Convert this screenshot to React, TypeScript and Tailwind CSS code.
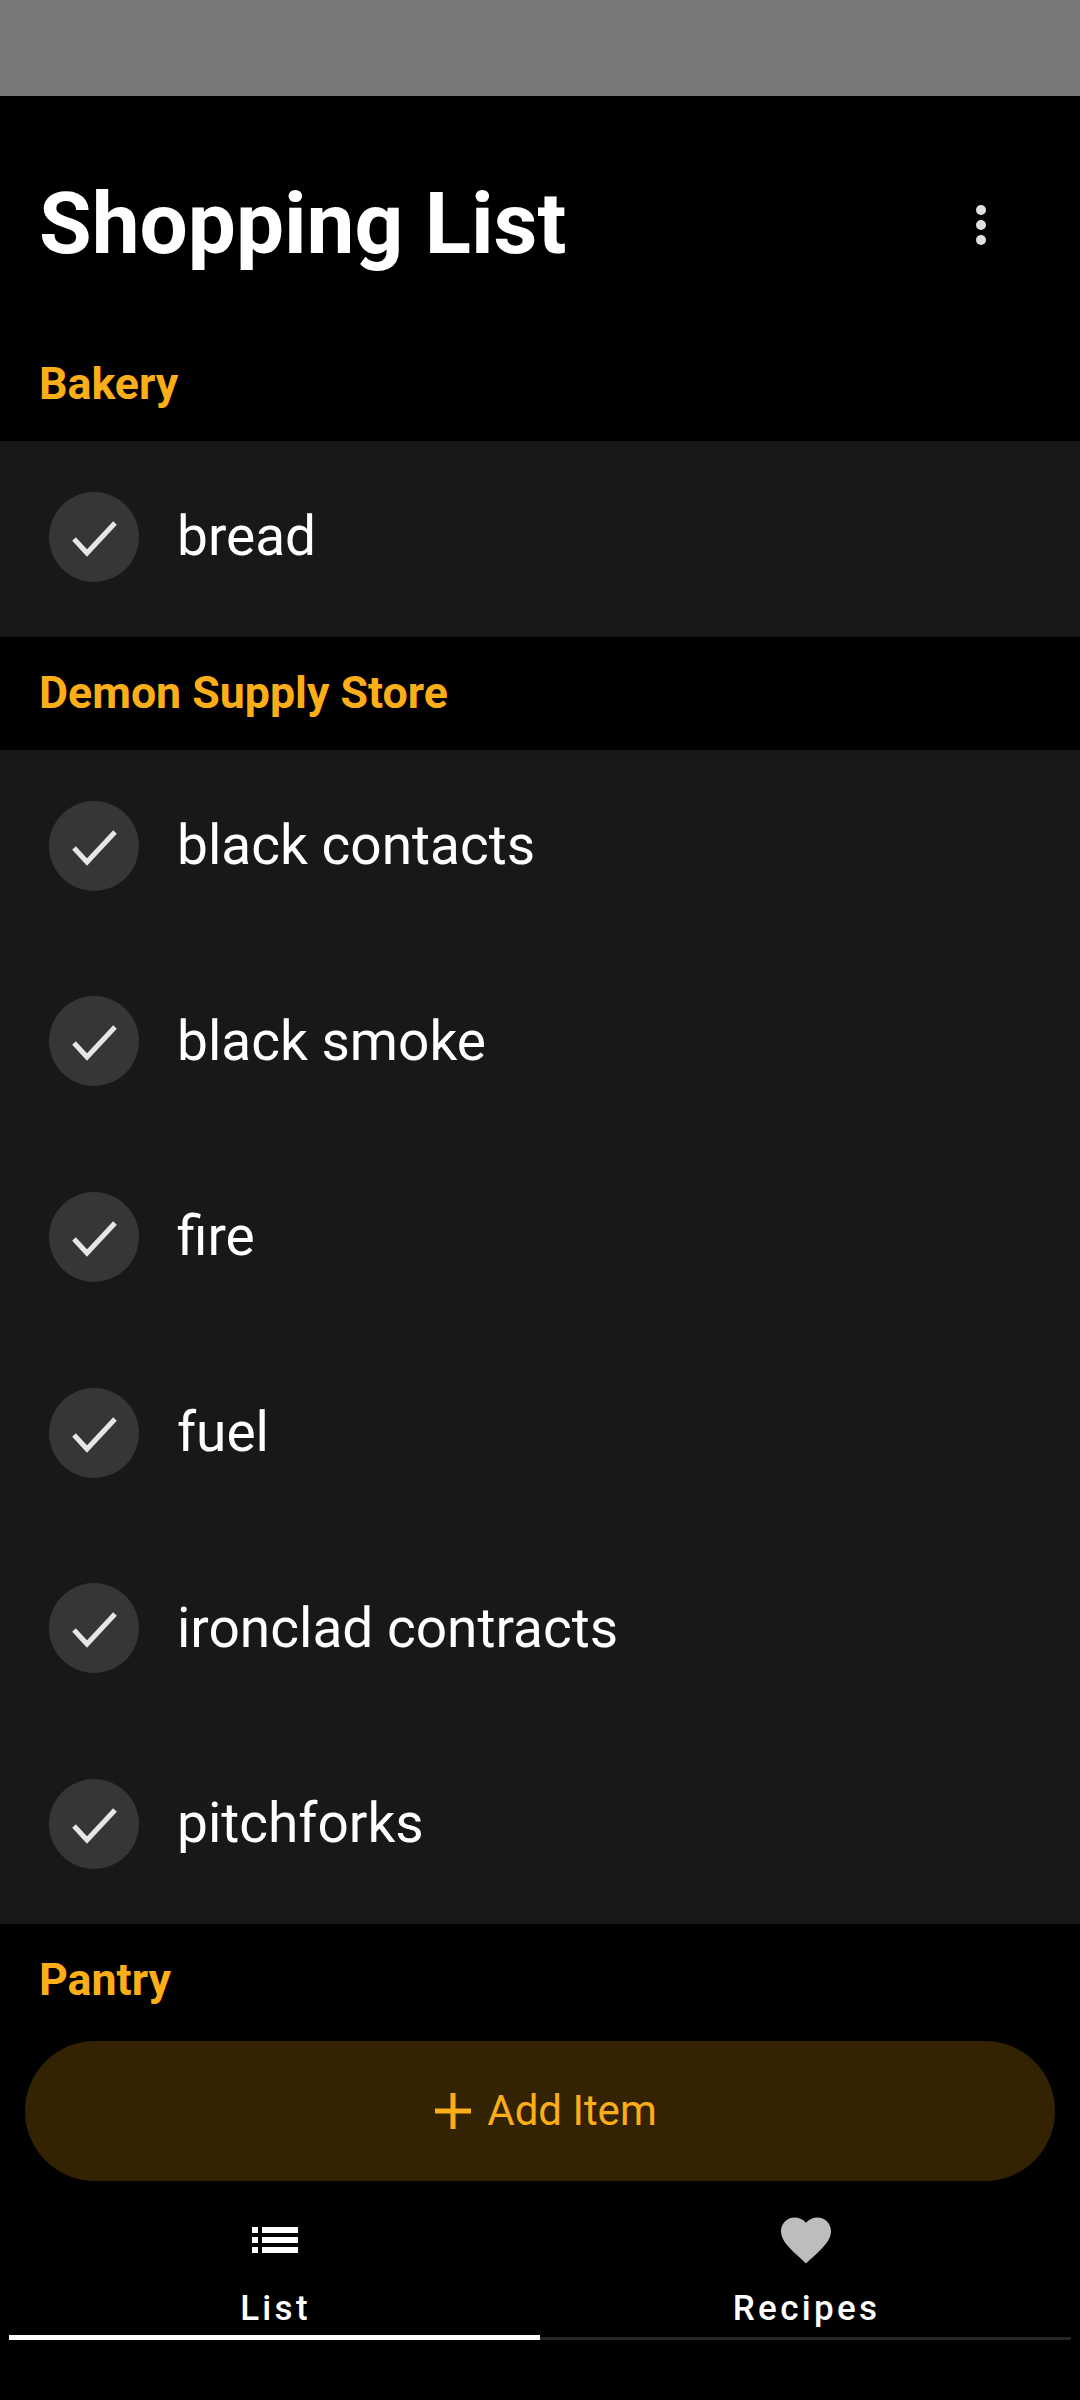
import React from 'react';

const sections = [
  { name: 'Bakery', items: ['bread'], headerClass: 'h-[105px] pb-[8px]' },
  {
    name: 'Demon Supply Store',
    items: ['black contacts', 'black smoke', 'fire', 'fuel', 'ironclad contracts', 'pitchforks'],
    headerClass: 'h-[113px]'
  },
  { name: 'Pantry', items: [], headerClass: 'h-[113px]' }
];

const CheckButton = () => (
  <div className="w-[90px] h-[90px] rounded-full bg-[#363636] shrink-0">
    <svg width="90" height="90" viewBox="0 0 90 90" fill="none">
      <path d="M25 47 L38 61 L66 31" stroke="#e6e6e6" strokeWidth="5" strokeLinecap="butt" strokeLinejoin="miter" />
    </svg>
  </div>
);

const App: React.FC = () => {
  return (
    <div className="h-[2400px] w-[1080px] bg-black flex flex-col overflow-hidden font-['Roboto',sans-serif]">
      <div className="h-[96px] bg-[#797979] shrink-0" />

      <header className="h-[240px] shrink-0 flex items-center justify-between pl-[39px] pr-[92px] pt-[18px]">
        <h1 className="text-[85.5px] leading-none font-bold text-white">Shopping List</h1>
        <svg width="14" height="44" viewBox="0 0 14 44" fill="#e0e0e0">
          <circle cx="7" cy="7" r="5" />
          <circle cx="7" cy="22" r="5" />
          <circle cx="7" cy="37" r="5" />
        </svg>
      </header>

      <main className="flex-1 min-h-0 overflow-hidden">
        {sections.map((section) => (
          <section key={section.name}>
            <div className={`${section.headerClass} flex items-center pl-[39px]`}>
              <h2 className="text-[44.7px] leading-none font-bold text-[#fbae17]">{section.name}</h2>
            </div>
            {section.items.length > 0 && (
              <ul className="bg-[#181818]">
                {section.items.map((item) => (
                  <li key={item} className="h-[195.7px] flex items-center pl-[49px] gap-[38px] pb-[4px]">
                    <CheckButton />
                    <span className="text-[55px] leading-none text-white">{item}</span>
                  </li>
                ))}
              </ul>
            )}
          </section>
        ))}
      </main>

      <div className="shrink-0 px-[25px]">
        <button type="button" className="w-full h-[140px] rounded-full bg-[#342303] flex items-center justify-center gap-[16px] pl-[12px] text-[#fbae17]">
          <svg width="36" height="36" viewBox="0 0 36 36" fill="none" stroke="currentColor" strokeWidth="5">
            <path d="M18 0 V36 M0 18 H36" />
          </svg>
          <span className="text-[42px] leading-none">Add Item</span>
        </button>
      </div>

      <nav className="shrink-0 h-[219px] flex px-[9px] pb-[60px] pt-[29px]">
        <div className="flex-1 flex flex-col items-center border-b-[5px] border-white">
          <svg width="60" height="60" viewBox="0 0 60 60" fill="#ffffff">
            <rect x="7" y="17" width="6" height="6" />
            <rect x="17" y="17" width="36" height="6" />
            <rect x="7" y="27" width="6" height="6" />
            <rect x="17" y="27" width="36" height="6" />
            <rect x="7" y="37" width="6" height="6" />
            <rect x="17" y="37" width="36" height="6" />
          </svg>
          <span className="mt-[21px] pl-[2px] text-[35px] leading-none font-medium tracking-[3.3px] text-white">List</span>
        </div>
        <div className="flex-1 flex flex-col items-center border-b-[3px] border-[#262626]">
          <svg width="60" height="60" viewBox="0 0 24 24" fill="#bdbdbd">
            <path d="M12 21.35l-1.45-1.32C5.4 15.36 2 12.28 2 8.5 2 5.42 4.42 3 7.5 3c1.74 0 3.41.81 4.5 2.09C13.09 3.81 14.76 3 16.5 3 19.58 3 22 5.42 22 8.5c0 3.78-3.4 6.86-8.55 11.54L12 21.35z" />
          </svg>
          <span className="mt-[21px] pl-[2px] text-[35px] leading-none font-medium tracking-[3.3px] text-white">Recipes</span>
        </div>
      </nav>
    </div>
  );
};

export default App;
